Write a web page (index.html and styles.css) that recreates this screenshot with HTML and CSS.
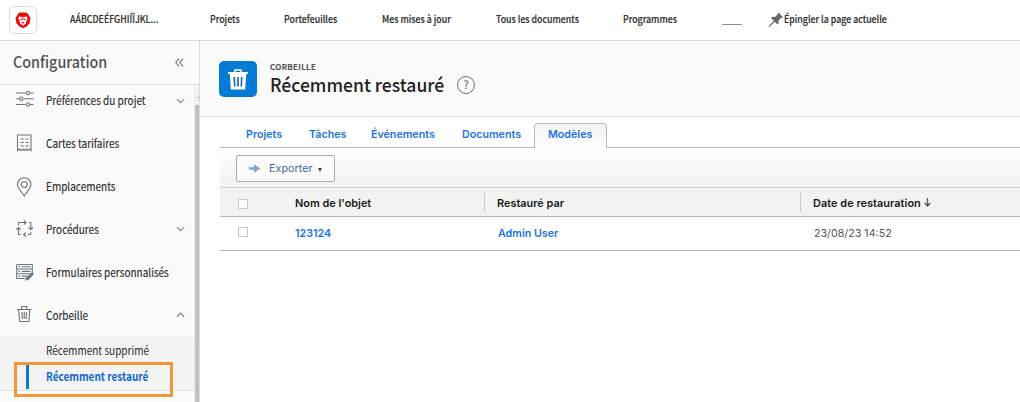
FILE: index.html
```html
<!DOCTYPE html>
<html lang="fr">
<head>
<meta charset="utf-8">
<title>Récemment restauré</title>
<link rel="stylesheet" href="styles.css">
</head>
<body>
<header class="topbar">
  <div class="logo">
    <svg width="16" height="17" viewBox="0 0 16 17"><path d="M3.500 1.200 5 .6h6l1.500.6L15.500 6l-1 5.200L12 14.200 8 16.300 4 14.200 1.500 11.200.5 6z" fill="#ec0b0b"/><path d="M4.300 4.200 6.200 5.100 8 4.500l1.800.6 1.900-.9 1 2.600-1.200 1.600-.6 3L8 13.700l-2.900-2.300-.6-3-1.200-1.600z" fill="#fff"/><path d="M4.600 6.400l2.500 1-.8 1.300zM11.400 6.400l-2.500 1 .8 1.300zM6.300 10h3.400L8 11.900zM7.500 4h1v4h-1z" fill="#ec0b0b"/></svg>
  </div>
  <nav class="pins">
    <a class="pin pin-home">AÁBCDEÉFGHIÍÎJKL...</a>
    <a class="pin pin-projects">Projets</a>
    <a class="pin pin-portfolios">Portefeuilles</a>
    <a class="pin pin-updates">Mes mises à jour</a>
    <a class="pin pin-docs">Tous les documents</a>
    <a class="pin pin-programs">Programmes</a>
  </nav>
  <span class="blank"></span>
  <div class="pin-current">
    <svg width="16" height="16" viewBox="0 0 16 16"><path d="M10.400.5 15 5.200l-1 .7-.8-.1-2.700 2.900.1 2.800-1 1L6.700 9.700 1.300 14.900.6 14.300 5.800 8.800 3 6l1-1 2.900.1 2.900-2.800-.1-.9z" fill="#666"/></svg>
    <span class="pin">Épingler la page actuelle</span>
  </div>
</header>
<div class="shell">
  <aside class="sidebar">
    <div class="side-head"><span class="side-title">Configuration</span>
      <svg width="9" height="9" viewBox="0 0 9 9" class="line"><path d="M4 .7.8 4.500 4 8.300M8 .7 4.800 4.500 8 8.300"/></svg>
    </div>
    <div class="side-body">
      <div class="menu">
        <div class="item first">
          <svg class="icon line" viewBox="0 0 18 18"><path d="M0 3h9.500M14 3h3.500M0 8.700h3M7.500 8.700h10M0 14.500h9.500M14 14.500h3.500"/><circle cx="11.800" cy="3" r="1.700"/><circle cx="5.200" cy="8.700" r="1.700"/><circle cx="11.800" cy="14.500" r="1.700"/></svg>
          <span class="label">Préférences du projet</span><svg class="chev line" viewBox="0 0 9 6"><path d="M1 1l3.500 3.800L8 1"/></svg>
        </div>
        <div class="item">
          <svg class="icon line" viewBox="0 0 18 18"><path d="M1.500 16.500V1H15v15.500l-1.900-1.500-1.900 1.500-1.500-1.500-1.500 1.500-1.500-1.500-1.600 1.500-1.800-1.500zM4.500 5h3.300M9.500 5h3M4.500 8.500h3.300M9.500 8.500h3M4.500 12h3.300M9.500 12h3"/></svg>
          <span class="label">Cartes tarifaires</span>
        </div>
        <div class="item">
          <svg class="icon pinicon line" viewBox="0 0 18 20"><path d="M8.200 19C6.500 16 1.500 11.300 1.500 7.500a6.700 6.700 0 0 1 13.400 0C14.900 11.300 10 16 8.200 19z"/><circle cx="8.200" cy="7.500" r="3"/></svg>
          <span class="label">Emplacements</span>
        </div>
        <div class="item">
          <svg class="icon line" viewBox="0 0 18 18"><path d="M2.500 5.500V2.500h7M13 2.500h1.800v6.500M14.800 12v2.500H12M9 14.500H8M4.800 14.500H2.500V8M7.800.5l2.200 2-2.200 2M12.600 7.500l2.200 2 2.200-2M9.800 12.500l-2.200 2 2.200 2M.3 9.500l2.200-2 2.200 2"/></svg>
          <span class="label">Procédures</span><svg class="chev line" viewBox="0 0 9 6"><path d="M1 1l3.500 3.800L8 1"/></svg>
        </div>
        <div class="item">
          <svg class="icon line forms" viewBox="0 0 18 18"><path d="M.7 1.500h15.600v9M.7 1.500v14h8.500M.7 6h15.600M.7 10.700h14M2.500 3.800h1.600M5.800 3.800h8.700M2.500 8.400h1.600M5.800 8.400h8.700M2.500 13.100h1.600M5.800 13.100h5"/><path d="M10 17l.8-2.800 5.500-4.300.8 1.300-4.800 5z" fill="#747a80"/></svg>
          <span class="label">Formulaires personnalisés</span>
        </div>
        <div class="item trash">
          <svg class="icon line" viewBox="0 0 18 18"><path d="M1 4.500h14.500M5.600 4.500v-3h5.200v3M2.700 4.500l.9 12h9.300l.9-12M6 7l.3 7M8.250 7v7M10.500 7l-.3 7"/></svg>
          <span class="label">Corbeille</span><svg class="chev line" viewBox="0 0 9 6"><path d="M1 4.800 4.500 1 8 4.800"/></svg>
        </div>
        <div class="submenu">
          <a class="sub"><span class="sub-label">Récemment supprimé</span></a>
          <a class="sub active"><span class="sub-label">Récemment restauré</span></a>
        </div>
      </div>
      <div class="scroll"><div class="arrow"></div><div class="thumb"></div></div>
    </div>
    <div class="highlight"></div>
  </aside>
  <main class="main">
    <div class="page-head">
      <div class="tile"><svg width="20" height="21" viewBox="0 0 20 21"><path d="M0 3h6V1.500Q6 .3 7.200.3h5.600Q14 .3 14 1.500V3h6v2h-1.800l-1 15.500H2.800L1.800 5H0zM7.500 3h5V1.800h-5z" fill="#fff" fill-rule="evenodd"/><path d="M6.300 8l.4 9.500M10 8v9.500M13.700 8l-.4 9.500" stroke="#1468ac" stroke-width="1.600"/></svg></div>
      <div class="titles"><span class="crumb">CORBEILLE</span><h1 class="title">Récemment restauré</h1></div>
      <span class="help">?</span>
    </div>
    <div class="tabs">
      <a class="tab t1">Projets</a><a class="tab t2">Tâches</a><a class="tab t3">Événements</a><a class="tab t4">Documents</a><a class="tab t5 current">Modèles</a>
    </div>
    <div class="toolbar">
      <button class="export"><svg width="13" height="9" viewBox="0 0 13 9"><path d="M0 3.500 6 3V.3l6.500 4.200L6 8.700V6L0 5.500l1.500-1z" fill="#86a8bd"/></svg><span class="export-label">Exporter</span><i class="caret"></i></button>
    </div>
    <div class="row head">
      <span class="check"></span><span class="cell c1">Nom de l'objet</span><span class="cell c2">Restauré par</span><span class="cell c3"><span>Date de restauration</span><svg width="7" height="9" viewBox="0 0 7 9"><path d="M3.500 0v8M.7 5l2.800 3 2.800-3" fill="none" stroke="#555" stroke-width="1.300"/></svg></span>
    </div>
    <div class="row data">
      <span class="check"></span><a class="cell c1">123124</a><a class="cell c2">Admin User</a><span class="cell c3 date">23/08/23 14:52</span>
    </div>
  </main>
</div>
</body>
</html>
```

FILE: styles.css
```css
* { box-sizing: border-box; }
body { margin: 0; width: 1020px; height: 402px; overflow: hidden; background: #fff; font-family: "Noto Sans CJK JP", sans-serif; color: #2c2c2c; }
svg { display: block; flex: none; }
.line { fill: none; stroke: #6e747a; stroke-width: 1.1; }

.topbar { display: flex; align-items: center; height: 41px; border-bottom: 1px solid #d9d9d9; padding-left: 9px; }
.logo { width: 28px; height: 28px; border: 1px solid #dcdcdc; border-radius: 5px; display: grid; place-items: center; flex: none; }
.pins { display: flex; margin-left: 33px; }
.pin { font-size: 10px; line-height: 16px; margin-bottom: 2px; font-weight: 500; color: #333; white-space: nowrap; flex: none; -webkit-text-stroke: .2px #333; }
/* Condensed faces: the horizontal scale narrows the glyphs evenly. */
.pin, .label, .sub-label, .side-title, .title { transform-origin: 0 50%; }
.pin { transform: scaleX(.88); }
.label, .sub-label { transform: scaleX(.87); }
.side-title { transform: scaleX(.925); }
.title { transform: scaleX(.95); }
.pin-home { width: 140px; }
.pin-projects { width: 74px; }
.pin-portfolios { width: 98px; }
.pin-updates { width: 114px; }
.pin-docs { width: 127px; }
.pin-programs { width: 99px; }
.blank { width: 20px; height: 1px; background: #8c8c8c; margin-top: 8px; }
.pin-current { display: flex; align-items: center; margin-left: 26px; }

.shell { display: flex; height: 361px; }
.sidebar { width: 200px; border-right: 1px solid #ddd; background: #fafafa; display: flex; flex-direction: column; position: relative; flex: none; }
.side-head { height: 44px; border-bottom: 1px solid #dedede; display: flex; align-items: center; justify-content: space-between; padding: 0 15px 1px 13px; flex: none; }
.side-title { font-size: 15.500px; font-weight: 500; color: #505050; line-height: 24px; margin-bottom: 3px; }
.side-body { display: flex; height: 317px; }
.menu { width: 194px; flex: none; }
.item { height: 43px; display: flex; align-items: center; padding: 0 9px 0 16px; }
.item.first { height: 37px; padding-bottom: 5px; }
.first .icon { margin-bottom: 4px; }
.trash .icon { margin-bottom: 4px; }
.icon { width: 18px; height: 18px; margin: 0 12px 1px 0; }
.pinicon { height: 20px; margin-bottom: 0; }
.label { font-size: 11.500px; line-height: 18px; margin-bottom: 2px; flex: 1; white-space: nowrap; -webkit-text-stroke: .15px #2c2c2c; }
.chev { width: 9px; height: 6px; margin-bottom: 1px; }
.submenu { height: 54px; background: #f3f3f3; border-bottom: 1px solid #dfdfdf; }
.sub { display: flex; align-items: center; height: 27px; font-size: 11.500px; padding: 0 0 1px 46px; white-space: nowrap; }
.active { color: #0d66d0; font-weight: 700; height: 25px; margin-left: 26px; border-left: 3px solid #0f78cf; padding-left: 17px; }
.scroll { width: 5px; padding-left: 1px; background: #f1f1f1; }
.arrow { height: 20px; background: linear-gradient(#666, #666) 3px 12px / 1px 1px no-repeat; }
.thumb { width: 4px; height: 297px; background: #c1c1c1; }
.highlight { position: absolute; left: 14px; top: 321px; width: 159px; height: 35px; border: 3px solid #f29737; }

.main { flex: 1; min-width: 0; }
.page-head { height: 76px; background: #fafafa; border-bottom: 1px solid #e4e4e4; display: flex; align-items: flex-start; padding: 20px 0 0 19px; }
.tile { width: 38px; height: 36px; border-radius: 5px; background: #047cd6; display: grid; place-items: center; }
.titles { margin-left: 13px; display: flex; flex-direction: column; width: 173px; }
.crumb { font-size: 8px; font-weight: 500; line-height: 11px; letter-spacing: .4px; color: #444; -webkit-text-stroke: .2px #444; }
.title { margin: 0; font-size: 18.500px; line-height: 25px; font-weight: 500; color: #222; white-space: nowrap; }
.help { margin: 15px 0 0 14px; width: 18px; height: 18px; border: 1px solid #6e6e6e; border-radius: 50%; font-size: 11px; line-height: 15px; text-align: center; color: #555; }

.tabs { margin: 6px 0 0 20px; height: 25px; border-bottom: 1px solid #b9b9b9; display: flex; font: 600 10.700px/24px Inter, sans-serif; }
.tab { color: #1a73e0; white-space: nowrap; padding-left: 13px; }
.t1 { padding-left: 26px; width: 76px; }
.t2 { width: 62px; }
.t3 { width: 90px; }
.t4 { width: 86px; padding-left: 14px; }
.t5 { width: 73px; }
.current { height: 25px; line-height: 22px; background: linear-gradient(#f2f2f2, #fff); border: 1px solid #b9b9b9; border-bottom: 0; border-radius: 4px 4px 0 0; }
.toolbar { margin-left: 20px; height: 40px; background: linear-gradient(#fff, #f2f2f2); border-bottom: 1px solid #cfcfcf; padding: 7px 0 0 16px; }
.export { width: 99px; height: 27px; background: #fbfbfb; border: 1px solid #acacac; border-radius: 2px; display: flex; align-items: center; padding: 0 0 0 11px; font: 10.800px Inter, sans-serif; color: #48699a; }
.export-label { margin-left: 8px; }
.caret { margin: 2px 0 0 5px; border: 2.500px solid transparent; border-top: 4px solid #444; border-bottom: 0; }
.row { margin-left: 20px; display: flex; align-items: center; font: 600 10.900px/16px Inter, sans-serif; border-bottom: 1px solid #b5b5b5; padding-left: 18px; color: #1a1a1a; }
.head { height: 29px; background: #f2f2f2; }
.data { height: 34px; color: #1a73e0; font-size: 10.700px; }
.check { width: 10px; height: 10px; border: 1px solid #c8c8c8; background: #fff; flex: none; }
.head .check { margin-top: 3px; }
.cell { white-space: nowrap; height: 19px; line-height: 20px; flex: none; }
.c1 { width: 236px; padding-left: 47px; }
.c2 { width: 316px; padding-left: 14px; }
.c3 { padding-left: 14px; display: flex; align-items: center; gap: 3px; }
.head .c3 { letter-spacing: .05px; padding-top: 1px; }
.head .c2, .head .c3 { border-left: 1px solid #c9c9c9; padding-left: 12px; }
.data .check { margin-top: -3px; }
.data .date { font-weight: 400; color: #555; }
```
